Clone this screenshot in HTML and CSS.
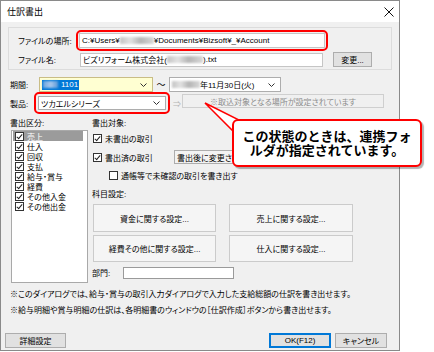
FILE: index.html
```html
<html>

<head>
    <link rel="stylesheet" href="styles.css">
</head>

<body>
    <div class="page">
        <div class="dialog">
            <div class="titlebar">
                <span class="title">仕訳書出</span>
                <svg class="close" width="10" height="10" viewBox="0 0 10 10">
                    <path d="M0.5 0.5 L9.5 9.5 M9.5 0.5 L0.5 9.5" stroke="#111" stroke-width="1" fill="none" />
                </svg>
            </div>
            <div class="content">
                <div class="filebox">
                    <div class="frow r1">
                        <span class="lbl-file">ファイルの場所:</span>
                        <div class="mark mark-path">
                            <div class="field path">C:¥Users¥<span class="blur b-user"></span>¥Documents¥Bizsoft¥_¥Account</div>
                        </div>
                    </div>
                    <div class="frow r2">
                        <span class="lbl-file">ファイル名:</span>
                        <div class="field fname">ビズリフォーム株式会社(<span class="blur b-name"></span>).txt</div>
                        <div class="btn btn-change">変更...</div>
                    </div>
                </div>

                <div class="prow period">
                    <span class="lbl-short">期間:</span>
                    <div class="combo combo-from">
                        <span class="sel"><span class="blur b-sel"></span>1101</span>
                        <svg class="chev" width="7" height="4" viewBox="0 0 7 4"><polyline points="0.5,0.5 3.5,3.5 6.5,0.5" fill="none" stroke="#333" stroke-width="1" /></svg>
                    </div>
                    <span class="tilde">～</span>
                    <div class="combo combo-to">
                        <span><span class="blur b-year"></span>年11月30日(火)</span>
                        <svg class="chev" width="7" height="4" viewBox="0 0 7 4"><polyline points="0.5,0.5 3.5,3.5 6.5,0.5" fill="none" stroke="#333" stroke-width="1" /></svg>
                    </div>
                </div>

                <div class="prow product">
                    <span class="lbl-prod">製品:</span>
                    <div class="mark mark-combo">
                        <div class="combo combo-prod">
                            <span>ツカエルシリーズ</span>
                            <svg class="chev" width="7" height="4" viewBox="0 0 7 4"><polyline points="0.5,0.5 3.5,3.5 6.5,0.5" fill="none" stroke="#333" stroke-width="1" /></svg>
                        </div>
                    </div>
                    <span class="arrow">⇒</span>
                    <div class="field disabled">※取込対象となる場所が設定されています</div>
                </div>

                <div class="main">
                    <div class="leftcol">
                        <div class="head">書出区分:</div>
                        <div class="listbox">
                            <div class="item selected"><span class="cb on"></span>売上</div>
                            <div class="item"><span class="cb on"></span>仕入</div>
                            <div class="item"><span class="cb on"></span>回収</div>
                            <div class="item"><span class="cb on"></span>支払</div>
                            <div class="item"><span class="cb on"></span>給与・賞与</div>
                            <div class="item"><span class="cb on"></span>経費</div>
                            <div class="item"><span class="cb on"></span>その他入金</div>
                            <div class="item"><span class="cb on"></span>その他出金</div>
                        </div>
                    </div>
                    <div class="midcol">
                        <div class="head">書出対象:</div>
                        <div class="cbrow first"><span class="cb on"></span>未書出の取引</div>
                        <div class="cbrow second">
                            <span class="cb on"></span><span class="cbtext">書出済の取引</span>
                            <div class="combo combo-after"><span>書出後に変更さ</span></div>
                        </div>
                        <div class="cbrow third"><span class="cb"></span>通帳等で未確認の取引を書き出す</div>
                        <div class="head subject">科目設定:</div>
                        <div class="setbtns">
                            <div class="setbtn">資金に関する設定...</div>
                            <div class="setbtn">売上に関する設定...</div>
                            <div class="setbtn">経費その他に関する設定...</div>
                            <div class="setbtn">仕入に関する設定...</div>
                        </div>
                        <div class="deptrow">
                            <span class="lbl-dept">部門:</span>
                            <div class="field dept"></div>
                        </div>
                    </div>
                </div>

                <p class="note n1">※このダイアログでは、給与・賞与の取引入力ダイアログで入力した支給総額の仕訳を書き出せます。</p>
                <p class="note n2">※給与明細や賞与明細の仕訳は、各明細書のウィンドウの［仕訳作成］ボタンから書き出せます。</p>

                <div class="footer">
                    <div class="btn btn-detail">詳細設定</div>
                    <div class="btn btn-ok">OK(F12)</div>
                    <div class="btn btn-cancel">キャンセル</div>
                </div>
            </div>
        </div>

        <svg class="pointer" width="434" height="352" viewBox="0 0 434 352">
            <polygon points="205,103 241,121 234,132" fill="#fff" stroke="#f00" stroke-width="1.5" />
        </svg>
        <div class="callout">
            <div class="cline">この状態のときは、連携フォ</div>
            <div class="cline">ルダが指定されています。</div>
        </div>
    </div>
</body>

</html>
```

FILE: styles.css
```css
body {
    margin: 0;
    background: #fff;
    font-family: "Liberation Sans", "Noto Sans CJK JP", sans-serif;
    font-size: 8px;
    color: #000;
    font-feature-settings: "palt";
}

.page {
    position: relative;
    width: 434px;
    height: 352px;
}

.dialog {
    width: 400px;
    height: 351px;
    box-sizing: border-box;
    border: 1px solid #8a8a8a;
    background: #f0f0f0;
    display: flex;
    flex-direction: column;
}

.titlebar {
    height: 21px;
    flex: none;
    background: #fff;
    display: flex;
    align-items: center;
    justify-content: space-between;
    padding: 0 5px 0 6px;
}

.title {
    font-size: 9px;
}

.content {
    flex: 1;
    display: flex;
    flex-direction: column;
    padding: 5px 7px 0 7px;
}

/* file group */
.filebox {
    height: 43px;
    box-sizing: border-box;
    border: 1px solid #dcdcdc;
    padding: 0 0 0 9px;
    display: flex;
    flex-direction: column;
}

.frow {
    display: flex;
    align-items: center;
}

.frow.r1 {
    height: 22px;
    margin-top: 1px;
}

.frow.r2 {
    height: 15px;
    margin-top: 1px;
}

.lbl-file {
    width: 58px;
    flex: none;
    white-space: nowrap;
}

.mark {
    border: 2px solid #f00;
    border-radius: 5px;
    padding: 1px;
    box-sizing: border-box;
    display: flex;
    align-items: center;
}

.mark-path {
    width: 252px;
    height: 21px;
}

.mark-path .field {
    width: 100%;
    height: 15px;
}

.field {
    background: #fff;
    border: 1px solid #c5c5c5;
    box-sizing: border-box;
    display: flex;
    align-items: center;
    padding-left: 2px;
    white-space: nowrap;
    overflow: hidden;
}

.field.fname {
    margin-left: 4px;
    width: 243px;
    height: 14px;
}

.blur {
    display: inline-block;
    height: 7px;
    background: linear-gradient(90deg, #c4c4c4, #e2e2e2 30%, #b5b5b5 60%, #d8d8d8);
    filter: blur(1px);
}

.b-user {
    width: 34px;
}

.b-name {
    width: 36px;
}

.b-year {
    width: 28px;
}

.b-sel {
    width: 15px;
    background: linear-gradient(90deg, #6aa6e0, #a8c8ec, #5c9ad8);
}

.btn {
    background: #e1e1e1;
    border: 1px solid #adadad;
    box-sizing: border-box;
    display: flex;
    align-items: center;
    justify-content: center;
    white-space: nowrap;
}

.btn-change {
    margin-left: 10px;
    width: 39px;
    height: 15px;
}

/* period / product */
.prow {
    display: flex;
    align-items: center;
}

.period {
    height: 15px;
    margin-top: 7px;
}

.product {
    height: 22px;
    align-items: flex-start;
}

.lbl-short,
.lbl-prod {
    margin-left: 2px;
    white-space: nowrap;
}

.lbl-short {
    width: 29px;
}

.lbl-prod {
    width: 24px;
    align-self: center;
}

.combo {
    height: 15px;
    box-sizing: border-box;
    border: 1px solid #adadad;
    background: #fff;
    display: flex;
    align-items: center;
    justify-content: space-between;
    padding: 0 5px 0 2px;
    white-space: nowrap;
    overflow: hidden;
}

.combo-from {
    width: 114px;
    background: #ffffd2;
    border-color: #c9bd86;
}

.sel {
    background: #0078d7;
    color: #fff;
    padding: 0 1px;
    height: 10px;
    display: flex;
    align-items: center;
    gap: 3px;
}

.tilde {
    width: 16px;
    text-align: center;
    font-size: 9px;
}

.combo-to {
    width: 112px;
}

.mark-combo {
    width: 136px;
    height: 22px;
    padding: 2px;
}

.combo-prod {
    width: 128px;
    height: 14px;
}

.arrow {
    width: 10px;
    margin-left: 2px;
    color: #b5b5b5;
    align-self: center;
    text-align: center;
}

.field.disabled {
    margin-top: 2px;
    width: 202px;
    height: 14px;
    background: #f0f0f0;
    border-color: #cfcfcf;
    color: #8d8d8d;
    justify-content: center;
    padding: 0;
}

/* main area */
.main {
    display: flex;
    margin-top: 4px;
}

.head {
    height: 12px;
    line-height: 12px;
    white-space: nowrap;
}

.leftcol {
    margin-left: 2px;
    width: 80px;
    flex: none;
}

.listbox {
    margin-left: 1px;
    width: 77px;
    height: 153px;
    box-sizing: border-box;
    border: 1px solid #a9a9a9;
    background: #fff;
}

.item {
    height: 10px;
    width: 70px;
    margin-left: 1px;
    padding-left: 2px;
    box-sizing: border-box;
    display: flex;
    align-items: center;
    white-space: nowrap;
}

.item.selected {
    background: #9b9b9b;
    color: #fff;
}

.cb {
    width: 9px;
    height: 9px;
    flex: none;
    box-sizing: border-box;
    border: 1px solid #333;
    background: #fff;
    margin-right: 3px;
    position: relative;
}

.cb.on::after {
    content: "";
    position: absolute;
    left: 2px;
    top: 0;
    width: 2px;
    height: 5px;
    border: solid #222;
    border-width: 0 1px 1px 0;
    transform: rotate(40deg);
}

.midcol {
    margin-left: 2px;
    display: flex;
    flex-direction: column;
}

.cbrow {
    display: flex;
    align-items: center;
    white-space: nowrap;
    margin-left: 1px;
}

.cbrow.first {
    height: 10px;
    margin-top: 3px;
}

.cbrow.second {
    height: 14px;
    margin-top: 7px;
}

.cbtext {
    width: 69px;
}

.combo-after {
    width: 66px;
    height: 14px;
    background: #f3f3f3;
    padding-right: 0;
}

.cbrow.third {
    height: 10px;
    margin-top: 6px;
    margin-left: 17px;
}

.head.subject {
    margin-top: 9px;
}

.setbtns {
    display: grid;
    grid-template-columns: 123px 124px;
    grid-template-rows: 28px 27px;
    column-gap: 13px;
    row-gap: 3px;
    margin-top: 3px;
    margin-left: 1px;
}

.setbtn {
    background: #f5f5f5;
    border: 1px solid #cbcbcb;
    display: flex;
    align-items: center;
    justify-content: center;
    white-space: nowrap;
}

.deptrow {
    display: flex;
    align-items: center;
    height: 13px;
    margin-top: 4px;
}

.lbl-dept {
    width: 31px;
}

.field.dept {
    width: 111px;
    height: 12px;
    border-color: #9a9a9a;
}

/* notes and footer */
.note {
    margin: 0 0 0 2px;
    height: 12px;
    line-height: 12px;
    white-space: nowrap;
}

.note.n1 {
    margin-top: 6px;
}

.note.n2 {
    margin-top: 4px;
}

.footer {
    display: flex;
    margin-top: 16px;
    margin-left: -3px;
    margin-right: 5px;
    gap: 4px;
}

.footer .btn {
    height: 15px;
}

.btn-detail {
    width: 61px;
    margin-right: auto;
}

.btn-ok {
    width: 62px;
    border-color: #0078d7;
    box-shadow: inset 0 0 0 1px #0078d7;
}

.btn-cancel {
    width: 52px;
}

/* annotation */
.pointer {
    position: absolute;
    left: 0;
    top: 0;
    z-index: 1;
    pointer-events: none;
}

.callout {
    position: absolute;
    left: 232px;
    top: 119px;
    width: 190px;
    height: 48px;
    box-sizing: border-box;
    z-index: 2;
    background: #fff;
    border: 2px solid #f00;
    border-radius: 6px;
    box-shadow: 2px 2px 1px rgba(0, 0, 0, 0.3);
    font-family: "Noto Sans CJK JP", sans-serif;
    font-feature-settings: normal;
    font-weight: 700;
    font-size: 13px;
    line-height: 14px;
    padding-top: 8px;
}

.cline {
    white-space: nowrap;
    text-align: center;
}
```
